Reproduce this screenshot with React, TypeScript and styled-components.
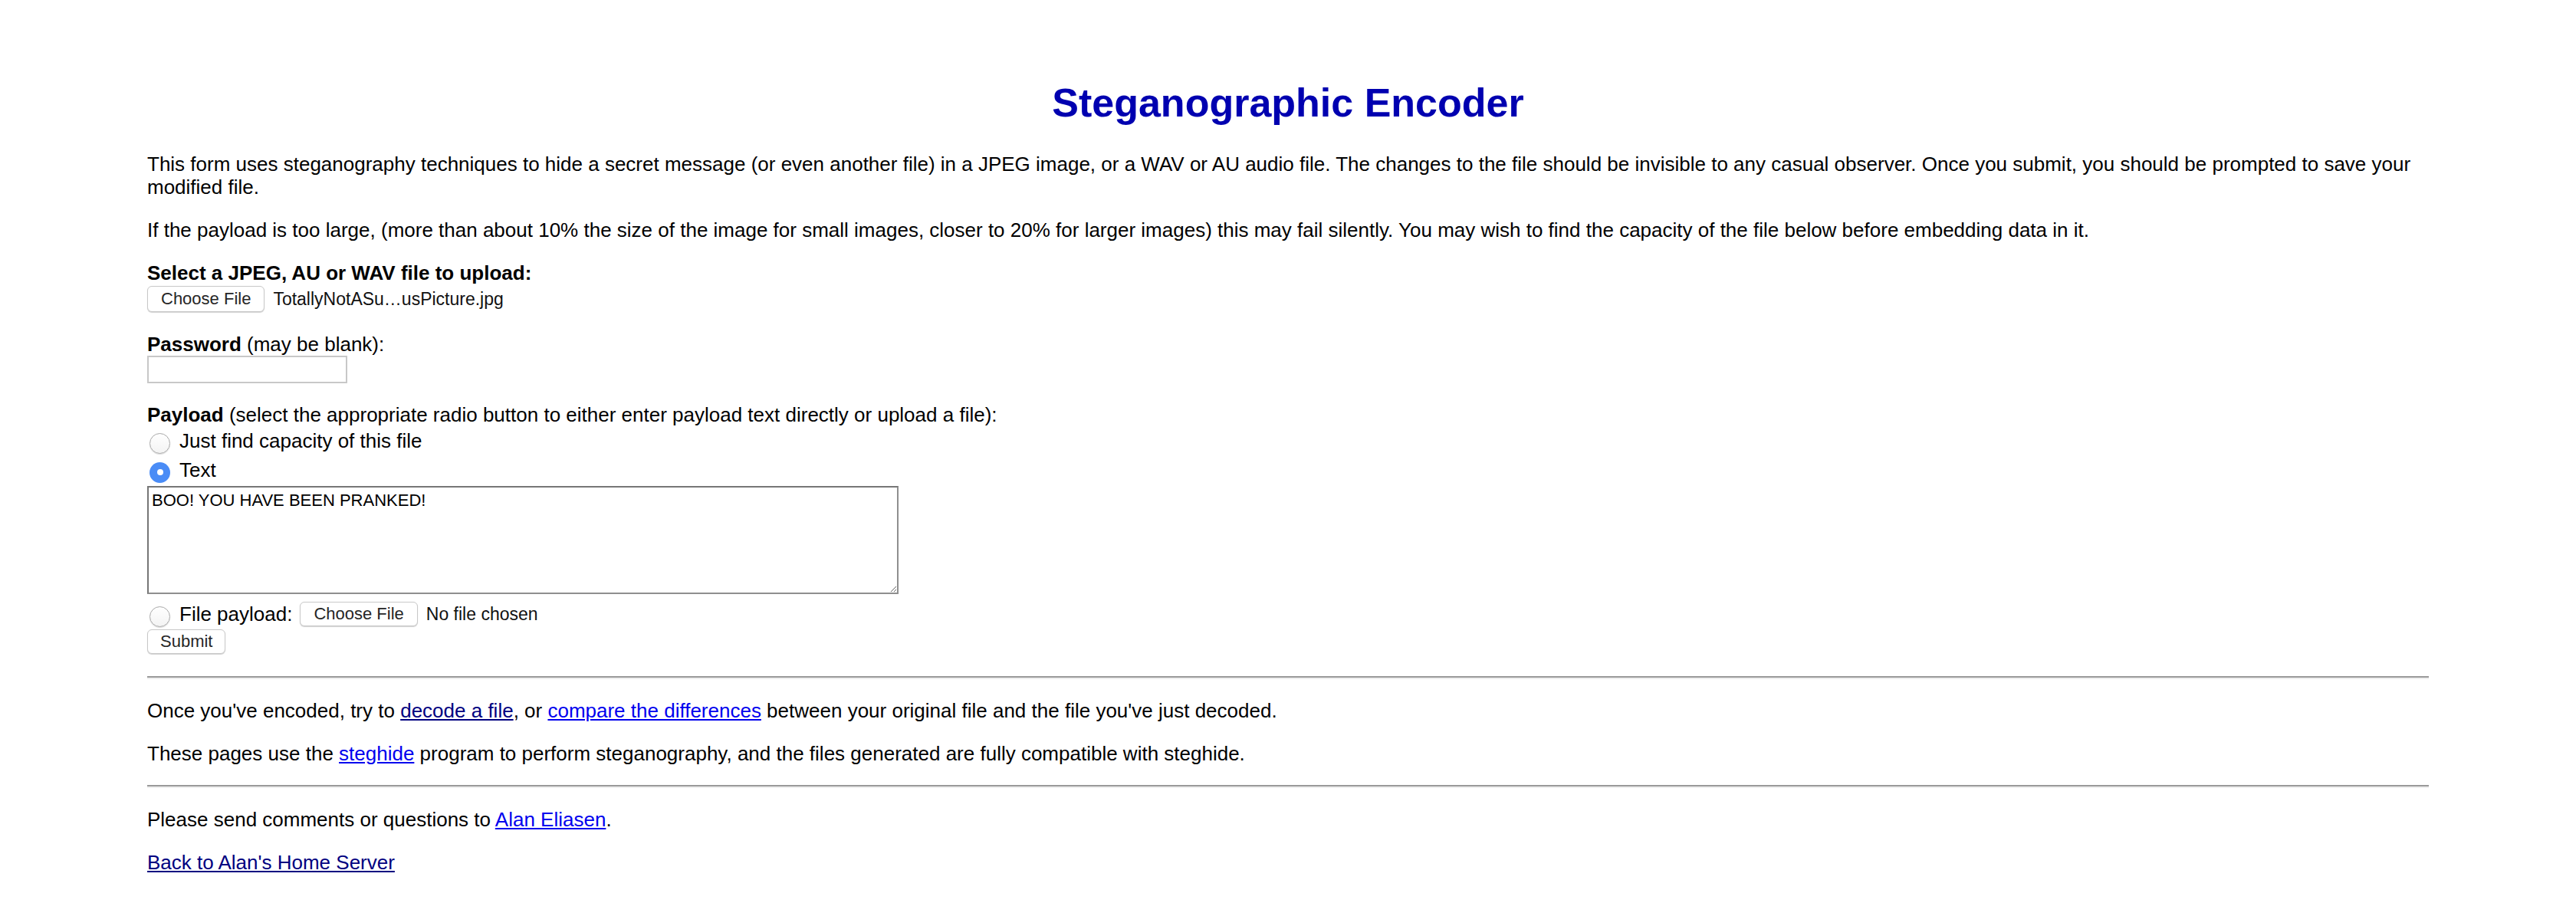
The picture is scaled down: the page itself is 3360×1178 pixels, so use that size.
import React from "react";
import styled, { createGlobalStyle } from "styled-components";

const GlobalStyle = createGlobalStyle`
  html, body {
    margin: 0;
    padding: 0;
    background: #ffffff;
  }
  body {
    font-family: "Liberation Sans", Arial, Helvetica, sans-serif;
    color: #000000;
  }
`;

const Page = styled.main`
  padding: 69px 192px 35px;
  font-size: 26px;
  line-height: 30px;
`;

const Title = styled.h1`
  margin: 35px 0;
  font-size: 52px;
  line-height: 60px;
  font-weight: bold;
  text-align: center;
  color: #0000b0;
`;

const Para = styled.p`
  margin: 26px 0;
`;

const Form = styled.form`
  margin: 26px 0 29px;
`;

const Group = styled.div`
  margin-top: 26px;
`;

const FieldLabel = styled.div`
  line-height: 30px;
  height: 30px;
`;

const FileRow = styled.div`
  display: flex;
  align-items: center;
  height: 37px;
`;

const ControlButton = styled.button`
  box-sizing: border-box;
  height: ${(p) => p.$h ?? 32}px;
  padding: 0 ${(p) => p.$px ?? 17}px;
  margin: 0;
  border: 1px solid #c8c8c8;
  border-radius: 6px;
  background: #ffffff;
  box-shadow: 0 1px 1px rgba(0, 0, 0, 0.18);
  font-family: "Liberation Sans", Arial, Helvetica, sans-serif;
  font-size: 22px;
  line-height: 1;
  color: #262626;
  cursor: pointer;
`;

const FileName = styled.span`
  margin-left: 11px;
  font-size: 23px;
  color: #111;
`;

const PasswordInput = styled.input`
  display: block;
  box-sizing: border-box;
  width: 261px;
  height: 36px;
  margin: 0;
  padding: 2px 4px;
  border: 2px solid #c8c8c8;
  background: #fff;
  font-size: 22px;
  outline: none;
`;

const RadioRow = styled.label`
  display: flex;
  align-items: center;
  height: ${(p) => p.$h ?? 38}px;
  margin-top: ${(p) => p.$mt ?? 0}px;
`;

const Radio = styled.input`
  appearance: none;
  -webkit-appearance: none;
  box-sizing: border-box;
  flex: none;
  width: 27px;
  height: 27px;
  margin: 6px 12px 0 3px;
  border-radius: 50%;
  border: 1px solid #a8a8a8;
  background: linear-gradient(#ffffff, #f3f3f3);
  box-shadow: 0 1px 1px rgba(0, 0, 0, 0.14);
  position: relative;
  &:checked {
    border: none;
    background: #4a8cf6;
    box-shadow: none;
  }
  &:checked::after {
    content: "";
    position: absolute;
    left: 9.5px;
    top: 9.5px;
    width: 8px;
    height: 8px;
    border-radius: 50%;
    background: #ffffff;
  }
`;

const LabelText = styled.span`
  white-space: nowrap;
  margin-right: 10px;
`;

const PayloadBox = styled.textarea`
  display: block;
  box-sizing: border-box;
  width: 980px;
  height: 141px;
  margin: 2px 0 0;
  padding: 4px;
  border: 2px solid;
  border-color: #767676 #8f8f8f #8f8f8f #767676;
  font-family: "Liberation Sans", Arial, Helvetica, sans-serif;
  font-size: 22px;
  line-height: 25px;
  color: #000;
  resize: both;
  outline: none;
`;

const SubmitRow = styled.div`
  margin-top: 2px;
  display: flex;
`;

const Rule = styled.hr`
  margin: 26px 0;
  height: 0;
  border: none;
  border-top: 2px solid #9a9a9a;
  border-bottom: 2px solid #eeeeee;
`;

const Link = styled.a`
  color: ${(p) => (p.$visited ? "#000080" : "#0000ee")};
  text-decoration: underline;
`;

export default function App() {
  return (
    <>
      <GlobalStyle />
      <Page>
        <Title>Steganographic Encoder</Title>
        <Para>
          This form uses steganography techniques to hide a secret message (or
          even another file) in a JPEG image, or a WAV or AU audio file. The
          changes to the file should be invisible to any casual observer. Once
          you submit, you should be prompted to save your modified file.
        </Para>
        <Para>
          If the payload is too large, (more than about 10% the size of the
          image for small images, closer to 20% for larger images) this may fail
          silently. You may wish to find the capacity of the file below before
          embedding data in it.
        </Para>
        <Form onSubmit={(e) => e.preventDefault()}>
          <FieldLabel>
            <b>Select a JPEG, AU or WAV file to upload:</b>
          </FieldLabel>
          <FileRow>
            <ControlButton type="button" $h={34}>
              Choose File
            </ControlButton>
            <FileName>TotallyNotASu…usPicture.jpg</FileName>
          </FileRow>

          <Group>
            <FieldLabel>
              <b>Password</b> (may be blank):
            </FieldLabel>
            <PasswordInput type="password" />
          </Group>

          <Group>
            <FieldLabel>
              <b>Payload</b> (select the appropriate radio button to either
              enter payload text directly or upload a file):
            </FieldLabel>
            <RadioRow>
              <Radio type="radio" name="payload" value="capacity" />
              <LabelText>Just find capacity of this file</LabelText>
            </RadioRow>
            <RadioRow>
              <Radio type="radio" name="payload" value="text" defaultChecked />
              <LabelText>Text</LabelText>
            </RadioRow>
            <PayloadBox defaultValue="BOO! YOU HAVE BEEN PRANKED!" />
            <RadioRow $h={36} $mt={8}>
              <Radio type="radio" name="payload" value="file" />
              <LabelText>File payload:</LabelText>
              <ControlButton type="button">Choose File</ControlButton>
              <FileName>No file chosen</FileName>
            </RadioRow>
            <SubmitRow>
              <ControlButton type="submit" $px={16}>
                Submit
              </ControlButton>
            </SubmitRow>
          </Group>
        </Form>
        <Rule />
        <Para>
          Once you've encoded, try to{" "}
          <Link href="#" $visited>
            decode a file
          </Link>
          , or <Link href="#">compare the differences</Link> between your
          original file and the file you've just decoded.
        </Para>
        <Para>
          These pages use the <Link href="#">steghide</Link> program to perform
          steganography, and the files generated are fully compatible with
          steghide.
        </Para>
        <Rule />
        <Para>
          Please send comments or questions to{" "}
          <Link href="#">Alan Eliasen</Link>.
        </Para>
        <Para>
          <Link href="#" $visited>
            Back to Alan's Home Server
          </Link>
        </Para>
      </Page>
    </>
  );
}
